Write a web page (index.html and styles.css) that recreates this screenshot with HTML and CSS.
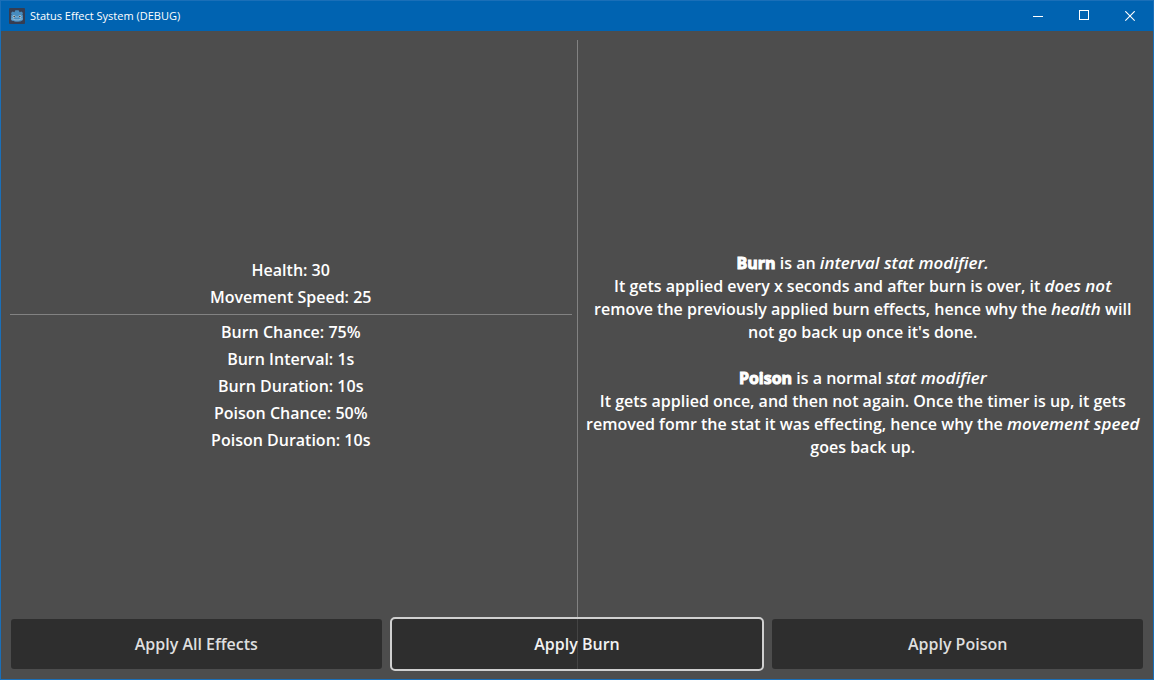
FILE: index.html
```
<!DOCTYPE html>
<html lang="en">
<head>
<meta charset="utf-8">
<title>Status Effect System (DEBUG)</title>
<link rel="stylesheet" href="styles.css">
</head>
<body>
<div class="window">
  <header class="titlebar">
    <svg class="app-icon" width="16" height="16" viewBox="0 0 16 16" aria-hidden="true">
      <rect width="16" height="16" rx="1" fill="#363d52"/>
      <path d="M2 5 3.600 3.600 5.400 4.300 6.400 2.200h3.200l1 2.100 1.800-.7L14 5l-.6 1.500.6 1V11c0 1.800-2.600 2.800-6 2.800S2 12.800 2 11V7.500l.6-1z" fill="#478cbf"/>
      <circle cx="5" cy="8.500" r="1.500" fill="#a9cbe2"/>
      <circle cx="11" cy="8.500" r="1.500" fill="#a9cbe2"/>
      <circle cx="5.200" cy="8.600" r=".8" fill="#414042"/>
      <circle cx="10.800" cy="8.600" r=".8" fill="#414042"/>
      <path d="M8 8.200v1.600M2.500 11h2.500l.4.900h5.200l.4-.9h2.500" stroke="#a9cbe2" stroke-width=".8" fill="none"/>
    </svg>
    <h1 class="title">Status Effect System (DEBUG)</h1>
    <div class="caption-buttons">
      <button class="caption-button" type="button" aria-label="Minimize"><svg width="10" height="11" viewBox="0 0 10 11" shape-rendering="crispEdges"><path d="M0 5.500h10" stroke="currentColor"/></svg></button>
      <button class="caption-button" type="button" aria-label="Maximize"><svg width="11" height="12" viewBox="0 0 11 12" shape-rendering="crispEdges"><path d="M.5 .5h9v9h-9z" fill="none" stroke="currentColor"/></svg></button>
      <button class="caption-button" type="button" aria-label="Close"><svg width="10" height="11" viewBox="0 0 10 11"><path d="M.3 .3l9.400 9.400M9.700 .3L.3 9.700" stroke="currentColor" stroke-width="1.200"/></svg></button>
    </div>
  </header>
  <main class="stage">
    <div class="panels">
      <section class="stats">
        <p>Health: 30</p>
        <p>Movement Speed: 25</p>
        <hr class="rule">
        <p>Burn Chance: 75%</p>
        <p>Burn Interval: 1s</p>
        <p>Burn Duration: 10s</p>
        <p>Poison Chance: 50%</p>
        <p>Poison Duration: 10s</p>
      </section>
      <div class="divider"></div>
      <section class="notes">
        <p><b>Burn</b> is an <i>interval stat modifier.</i><br>It gets applied every x seconds and after burn is over, it <i>does not</i> remove the previously applied burn effects, hence why the <i>health</i> will not go back up once it's done.</p>
        <p><b>Poison</b> is a normal <i>stat modifier</i><br>It gets applied once, and then not again. Once the timer is up, it gets removed fomr the stat it was effecting, hence why the <i>movement speed</i> goes back up.</p>
      </section>
    </div>
    <div class="actions">
      <button class="action" type="button">Apply All Effects</button>
      <button class="action action-focused" type="button">Apply Burn</button>
      <button class="action" type="button">Apply Poison</button>
    </div>
  </main>
</div>
</body>
</html>
```
FILE: styles.css
```
* {
  box-sizing: border-box;
}

body {
  margin: 0;
  font: 600 16px/23px "Open Sans", "Noto Sans", sans-serif;
  color: #fff;
  background: #4d4d4d;
}

p {
  margin: 0;
}

.window {
  display: flex;
  flex-direction: column;
  min-height: 100vh;
  border: 1px solid #1a6fb8;
}

.titlebar {
  display: flex;
  align-items: center;
  height: 30px;
  padding-left: 8px;
  background: #0063b1;
}

.title {
  margin: 0 auto 0 5px;
  font-size: 11px;
  font-weight: 400;
  line-height: 16px;
}

.caption-buttons {
  display: flex;
  align-self: stretch;
}

.caption-button {
  display: flex;
  align-items: center;
  justify-content: center;
  width: 46px;
  padding: 0;
  border: 0;
  color: #fff;
  background: none;
}

.stage {
  display: grid;
  flex: 1;
  padding: 9px 9px 10px;
}

.panels,
.actions {
  grid-area: 1 / 1;
}

.panels {
  display: grid;
  grid-template-columns: 1fr 1px 1fr;
  column-gap: 5px;
}

.stats,
.notes {
  display: flex;
  flex-direction: column;
  justify-content: center;
  text-align: center;
}

.stats {
  gap: 4px;
  padding: 2px 0 0;
}

.notes {
  gap: 23px;
  padding: 2px 2px 0 1px;
}

.rule {
  width: 100%;
  height: 1px;
  margin: 1px 0 2px;
  border: 0;
  background: #828282;
}

.divider {
  background: #828282;
}

.notes b {
  font-weight: 700;
  -webkit-text-stroke: 1px #fff;
}

.notes i {
  font-size: 17px;
  font-weight: 600;
  line-height: 1;
}

.actions {
  display: grid;
  grid-template-columns: repeat(3, 1fr);
  gap: 10px;
  align-self: end;
  padding: 0 1px;
}

.action {
  height: 50px;
  padding: 0 8px;
  border: 0;
  border-radius: 3px;
  font: inherit;
  color: #dfdfdf;
  background: rgba(26, 26, 26, 0.6);
}

.action-focused {
  color: #f2f2f2;
  outline: 2px solid #d0d0d0;
}
```
